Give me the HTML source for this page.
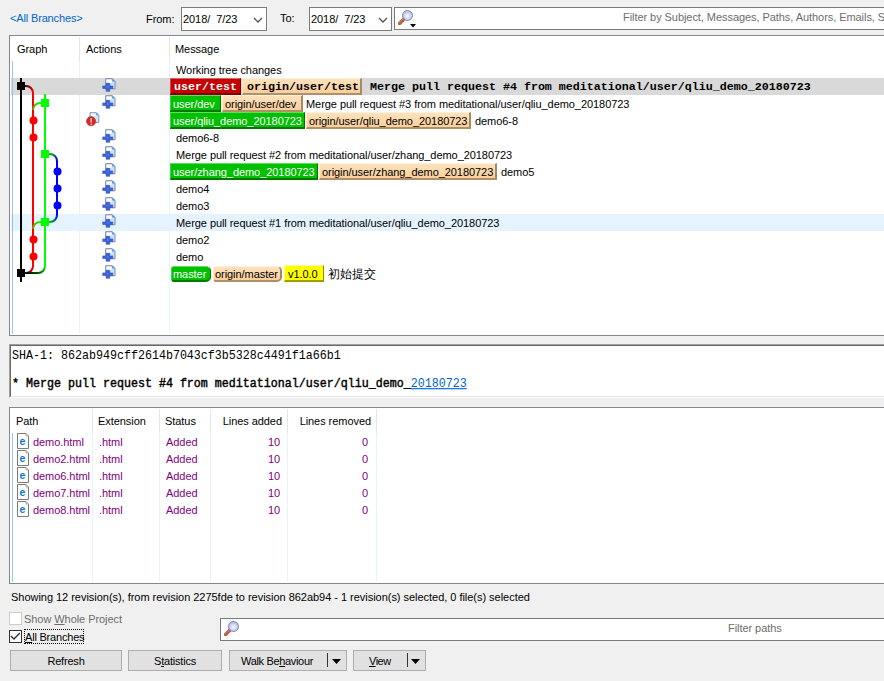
<!DOCTYPE html>
<html><head><meta charset="utf-8">
<style>
*{margin:0;padding:0;box-sizing:border-box}
html,body{width:884px;height:681px;overflow:hidden;background:#f0f0f0}
body{position:relative;font-family:"Liberation Sans",sans-serif;font-size:11px;color:#000;letter-spacing:-0.06px}
.a{position:absolute;white-space:pre}
.t{position:absolute;white-space:pre;line-height:17px;height:17px;padding-top:1px}
.box{position:absolute;background:#fff;border:1px solid #7a7a7a}
.mono{font-family:"Liberation Mono",monospace;font-size:11.67px;letter-spacing:0}
.b{position:absolute;height:17px;line-height:16px;white-space:pre;padding-left:3px}
.red{background:#c40000;color:#fff;border-top:1px solid #e06060;border-left:1px solid #d84848;border-right:1px solid #7a0000;border-bottom:2px solid #800000}
.grn{background:#00c000;color:#fff;border-top:1px solid #60e060;border-left:1px solid #40d040;border-right:1px solid #007000;border-bottom:2px solid #007800}
.org{background:linear-gradient(#fde2bd,#f9cf9a);color:#000;border-top:1px solid #fff0dc;border-left:1px solid #fde8c8;border-right:2px solid #a88860;border-bottom:2px solid #b09068}
.yel{background:#ffff00;color:#000;border-top:1px solid #ffff90;border-left:1px solid #ffff80;border-right:1px solid #909000;border-bottom:2px solid #a0a000}
.btn{position:absolute;top:650px;height:21px;background:#e1e1e1;border:1px solid #adadad;text-align:center;line-height:19px;padding-top:1px;letter-spacing:-0.2px}
u{text-decoration:underline}
</style></head><body>

<div class="a" style="left:10px;top:12px;color:#0066cc;letter-spacing:-0.15px">&lt;All Branches&gt;</div>
<div class="a" style="left:146px;top:13px">From:</div>
<div class="box" style="left:181px;top:7px;width:86px;height:24px"></div>
<div class="a" style="left:183px;top:13px">2018/  7/23</div>
<svg class="a" style="left:252px;top:15px" width="12" height="9"><path d="M2 3 L6 7 L10 3" fill="none" stroke="#555" stroke-width="1.3"/></svg>
<div class="a" style="left:280px;top:12px">To:</div>
<div class="box" style="left:309px;top:7px;width:83px;height:24px"></div>
<div class="a" style="left:311px;top:13px">2018/  7/23</div>
<svg class="a" style="left:377px;top:15px" width="12" height="9"><path d="M2 3 L6 7 L10 3" fill="none" stroke="#555" stroke-width="1.3"/></svg>
<div class="box" style="left:394px;top:7px;width:500px;height:23px"></div>
<div class="a" style="left:623px;top:11px;color:#6d6d6d">Filter by Subject, Messages, Paths, Authors, Emails, S</div>
<svg class="a" style="left:398px;top:9px" width="16" height="16" viewBox="0 0 16 16">
<defs><radialGradient id="mg1" cx="0.5" cy="0.55" r="0.6"><stop offset="0" stop-color="#ffffff"/><stop offset="0.5" stop-color="#d0d4f4"/><stop offset="1" stop-color="#a8aee0"/></radialGradient></defs>
<line x1="1.6" y1="14.4" x2="6.5" y2="9.5" stroke="#b86048" stroke-width="3.6" stroke-linecap="round"/><line x1="1.8" y1="13.6" x2="6" y2="9.4" stroke="#e0a088" stroke-width="1" stroke-dasharray="1 1"/>
<circle cx="9.5" cy="6.5" r="5" fill="url(#mg1)" stroke="#7880a8" stroke-width="0.9"/>
</svg>
<svg class="a" style="left:410px;top:24px" width="7" height="4"><path d="M0 0 H6 L3 3.5Z" fill="#000"/></svg>
<div class="box" style="left:9px;top:35px;width:890px;height:301px;border-color:#828790"></div>
<div class="a" style="left:17px;top:43px">Graph</div>
<div class="a" style="left:86px;top:43px">Actions</div>
<div class="a" style="left:175px;top:43px">Message</div>
<div class="a" style="left:79px;top:37px;width:1px;height:24px;background:#e5e5e5"></div>
<div class="a" style="left:169px;top:37px;width:1px;height:24px;background:#e5e5e5"></div>
<div class="a" style="left:79px;top:61px;width:1px;height:273px;background:#eaf2fb"></div>
<div class="a" style="left:169px;top:61px;width:1px;height:273px;background:#eaf2fb"></div>
<div class="a" style="left:11px;top:78px;width:874px;height:17px;background:#d9d9d9"></div>
<div class="a" style="left:11px;top:214px;width:874px;height:17px;background:#e5f3ff"></div>
<div class="a" style="left:12px;top:61px;width:1px;height:273px;background:#99c4f0"></div>
<svg class="a" style="left:0;top:0" width="80" height="340"><line x1="21" y1="78" x2="21" y2="282" stroke="#000" stroke-width="2"/><defs><linearGradient id="kr" x1="0" y1="0" x2="1" y2="1"><stop offset="0" stop-color="#500000"/><stop offset="1" stop-color="#ff0000"/></linearGradient><linearGradient id="gr" x1="1" y1="0" x2="0" y2="1"><stop offset="0" stop-color="#00ff00"/><stop offset="1" stop-color="#a08000"/></linearGradient><linearGradient id="gb" x1="0" y1="0" x2="1" y2="1"><stop offset="0" stop-color="#00c000"/><stop offset="1" stop-color="#0000ff"/></linearGradient><linearGradient id="bg" x1="1" y1="0" x2="0" y2="1"><stop offset="0" stop-color="#0000ff"/><stop offset="1" stop-color="#00c000"/></linearGradient><linearGradient id="rk" x1="1" y1="0" x2="0" y2="1"><stop offset="0" stop-color="#ff0000"/><stop offset="1" stop-color="#500000"/></linearGradient><linearGradient id="gk" x1="1" y1="0" x2="0" y2="1"><stop offset="0" stop-color="#00ff00"/><stop offset="1" stop-color="#000000"/></linearGradient></defs><path d="M25 86 H26 A7 7 0 0 1 33 93" fill="none" stroke="url(#kr)" stroke-width="2"/><line x1="33" y1="93" x2="33" y2="266.5" stroke="#f00" stroke-width="2"/><path d="M33 266 A7 7 0 0 1 26 273 H25" fill="none" stroke="url(#rk)" stroke-width="2"/><line x1="45" y1="94" x2="45" y2="266" stroke="#0f0" stroke-width="2"/><path d="M45 266 A7 7 0 0 1 38 273 H25" fill="none" stroke="url(#gk)" stroke-width="2"/><path d="M41 103 H40 A7 7 0 0 0 33 110" fill="none" stroke="url(#gr)" stroke-width="2"/><path d="M49 154 H50 A7 7 0 0 1 57 161" fill="none" stroke="url(#gb)" stroke-width="2"/><line x1="57" y1="161" x2="57" y2="215" stroke="#00f" stroke-width="2"/><path d="M57 215 A7 7 0 0 1 50 222 H49" fill="none" stroke="url(#bg)" stroke-width="2"/><path d="M41 222 H40 A7 7 0 0 0 33 229" fill="none" stroke="url(#gr)" stroke-width="2"/><rect x="17" y="82" width="8" height="8" fill="#000"/><rect x="41" y="99" width="8" height="8" fill="#0f0"/><circle cx="33.5" cy="120.5" r="4" fill="#f00"/><circle cx="33.5" cy="137.5" r="4" fill="#f00"/><rect x="41" y="150" width="8" height="8" fill="#0f0"/><circle cx="57.5" cy="171.5" r="4" fill="#00f"/><circle cx="57.5" cy="188.5" r="4" fill="#00f"/><circle cx="57.5" cy="205.5" r="4" fill="#00f"/><rect x="41" y="218" width="8" height="8" fill="#0f0"/><circle cx="33.5" cy="239.5" r="4" fill="#f00"/><circle cx="33.5" cy="256.5" r="4" fill="#f00"/><rect x="17" y="269" width="8" height="8" fill="#000"/></svg>
<svg class="a" style="left:100px;top:78px" width="17" height="15" viewBox="0 0 17 15">
<path d="M5.7 0.7 H12.3 L15 3.4 V10.8 H5.7Z" fill="#cfe1f7" stroke="#7a86a6" stroke-width="1"/>
<rect x="6.5" y="1.6" width="5" height="3.5" fill="#ffffff" opacity="0.85"/>
<path d="M12.2 0.6 L15.1 3.5 H12.2Z" fill="#3aa0f0"/>
<path d="M6.1 5.3 H9.8 V7.9 H12.8 V10.5 H9.8 V13.3 H6.1 V10.5 H2.7 V7.9 H6.1Z" fill="#3a64da" stroke="#2a44a8" stroke-width="0.5"/>
<rect x="6.6" y="8.2" width="2.4" height="1.2" fill="#5a84f0" opacity="0.8"/>
</svg>
<svg class="a" style="left:100px;top:95px" width="17" height="15" viewBox="0 0 17 15">
<path d="M5.7 0.7 H12.3 L15 3.4 V10.8 H5.7Z" fill="#cfe1f7" stroke="#7a86a6" stroke-width="1"/>
<rect x="6.5" y="1.6" width="5" height="3.5" fill="#ffffff" opacity="0.85"/>
<path d="M12.2 0.6 L15.1 3.5 H12.2Z" fill="#3aa0f0"/>
<path d="M6.1 5.3 H9.8 V7.9 H12.8 V10.5 H9.8 V13.3 H6.1 V10.5 H2.7 V7.9 H6.1Z" fill="#3a64da" stroke="#2a44a8" stroke-width="0.5"/>
<rect x="6.6" y="8.2" width="2.4" height="1.2" fill="#5a84f0" opacity="0.8"/>
</svg>
<svg class="a" style="left:100px;top:129px" width="17" height="15" viewBox="0 0 17 15">
<path d="M5.7 0.7 H12.3 L15 3.4 V10.8 H5.7Z" fill="#cfe1f7" stroke="#7a86a6" stroke-width="1"/>
<rect x="6.5" y="1.6" width="5" height="3.5" fill="#ffffff" opacity="0.85"/>
<path d="M12.2 0.6 L15.1 3.5 H12.2Z" fill="#3aa0f0"/>
<path d="M6.1 5.3 H9.8 V7.9 H12.8 V10.5 H9.8 V13.3 H6.1 V10.5 H2.7 V7.9 H6.1Z" fill="#3a64da" stroke="#2a44a8" stroke-width="0.5"/>
<rect x="6.6" y="8.2" width="2.4" height="1.2" fill="#5a84f0" opacity="0.8"/>
</svg>
<svg class="a" style="left:100px;top:146px" width="17" height="15" viewBox="0 0 17 15">
<path d="M5.7 0.7 H12.3 L15 3.4 V10.8 H5.7Z" fill="#cfe1f7" stroke="#7a86a6" stroke-width="1"/>
<rect x="6.5" y="1.6" width="5" height="3.5" fill="#ffffff" opacity="0.85"/>
<path d="M12.2 0.6 L15.1 3.5 H12.2Z" fill="#3aa0f0"/>
<path d="M6.1 5.3 H9.8 V7.9 H12.8 V10.5 H9.8 V13.3 H6.1 V10.5 H2.7 V7.9 H6.1Z" fill="#3a64da" stroke="#2a44a8" stroke-width="0.5"/>
<rect x="6.6" y="8.2" width="2.4" height="1.2" fill="#5a84f0" opacity="0.8"/>
</svg>
<svg class="a" style="left:100px;top:163px" width="17" height="15" viewBox="0 0 17 15">
<path d="M5.7 0.7 H12.3 L15 3.4 V10.8 H5.7Z" fill="#cfe1f7" stroke="#7a86a6" stroke-width="1"/>
<rect x="6.5" y="1.6" width="5" height="3.5" fill="#ffffff" opacity="0.85"/>
<path d="M12.2 0.6 L15.1 3.5 H12.2Z" fill="#3aa0f0"/>
<path d="M6.1 5.3 H9.8 V7.9 H12.8 V10.5 H9.8 V13.3 H6.1 V10.5 H2.7 V7.9 H6.1Z" fill="#3a64da" stroke="#2a44a8" stroke-width="0.5"/>
<rect x="6.6" y="8.2" width="2.4" height="1.2" fill="#5a84f0" opacity="0.8"/>
</svg>
<svg class="a" style="left:100px;top:180px" width="17" height="15" viewBox="0 0 17 15">
<path d="M5.7 0.7 H12.3 L15 3.4 V10.8 H5.7Z" fill="#cfe1f7" stroke="#7a86a6" stroke-width="1"/>
<rect x="6.5" y="1.6" width="5" height="3.5" fill="#ffffff" opacity="0.85"/>
<path d="M12.2 0.6 L15.1 3.5 H12.2Z" fill="#3aa0f0"/>
<path d="M6.1 5.3 H9.8 V7.9 H12.8 V10.5 H9.8 V13.3 H6.1 V10.5 H2.7 V7.9 H6.1Z" fill="#3a64da" stroke="#2a44a8" stroke-width="0.5"/>
<rect x="6.6" y="8.2" width="2.4" height="1.2" fill="#5a84f0" opacity="0.8"/>
</svg>
<svg class="a" style="left:100px;top:197px" width="17" height="15" viewBox="0 0 17 15">
<path d="M5.7 0.7 H12.3 L15 3.4 V10.8 H5.7Z" fill="#cfe1f7" stroke="#7a86a6" stroke-width="1"/>
<rect x="6.5" y="1.6" width="5" height="3.5" fill="#ffffff" opacity="0.85"/>
<path d="M12.2 0.6 L15.1 3.5 H12.2Z" fill="#3aa0f0"/>
<path d="M6.1 5.3 H9.8 V7.9 H12.8 V10.5 H9.8 V13.3 H6.1 V10.5 H2.7 V7.9 H6.1Z" fill="#3a64da" stroke="#2a44a8" stroke-width="0.5"/>
<rect x="6.6" y="8.2" width="2.4" height="1.2" fill="#5a84f0" opacity="0.8"/>
</svg>
<svg class="a" style="left:100px;top:214px" width="17" height="15" viewBox="0 0 17 15">
<path d="M5.7 0.7 H12.3 L15 3.4 V10.8 H5.7Z" fill="#cfe1f7" stroke="#7a86a6" stroke-width="1"/>
<rect x="6.5" y="1.6" width="5" height="3.5" fill="#ffffff" opacity="0.85"/>
<path d="M12.2 0.6 L15.1 3.5 H12.2Z" fill="#3aa0f0"/>
<path d="M6.1 5.3 H9.8 V7.9 H12.8 V10.5 H9.8 V13.3 H6.1 V10.5 H2.7 V7.9 H6.1Z" fill="#3a64da" stroke="#2a44a8" stroke-width="0.5"/>
<rect x="6.6" y="8.2" width="2.4" height="1.2" fill="#5a84f0" opacity="0.8"/>
</svg>
<svg class="a" style="left:100px;top:231px" width="17" height="15" viewBox="0 0 17 15">
<path d="M5.7 0.7 H12.3 L15 3.4 V10.8 H5.7Z" fill="#cfe1f7" stroke="#7a86a6" stroke-width="1"/>
<rect x="6.5" y="1.6" width="5" height="3.5" fill="#ffffff" opacity="0.85"/>
<path d="M12.2 0.6 L15.1 3.5 H12.2Z" fill="#3aa0f0"/>
<path d="M6.1 5.3 H9.8 V7.9 H12.8 V10.5 H9.8 V13.3 H6.1 V10.5 H2.7 V7.9 H6.1Z" fill="#3a64da" stroke="#2a44a8" stroke-width="0.5"/>
<rect x="6.6" y="8.2" width="2.4" height="1.2" fill="#5a84f0" opacity="0.8"/>
</svg>
<svg class="a" style="left:100px;top:248px" width="17" height="15" viewBox="0 0 17 15">
<path d="M5.7 0.7 H12.3 L15 3.4 V10.8 H5.7Z" fill="#cfe1f7" stroke="#7a86a6" stroke-width="1"/>
<rect x="6.5" y="1.6" width="5" height="3.5" fill="#ffffff" opacity="0.85"/>
<path d="M12.2 0.6 L15.1 3.5 H12.2Z" fill="#3aa0f0"/>
<path d="M6.1 5.3 H9.8 V7.9 H12.8 V10.5 H9.8 V13.3 H6.1 V10.5 H2.7 V7.9 H6.1Z" fill="#3a64da" stroke="#2a44a8" stroke-width="0.5"/>
<rect x="6.6" y="8.2" width="2.4" height="1.2" fill="#5a84f0" opacity="0.8"/>
</svg>
<svg class="a" style="left:100px;top:265px" width="17" height="15" viewBox="0 0 17 15">
<path d="M5.7 0.7 H12.3 L15 3.4 V10.8 H5.7Z" fill="#cfe1f7" stroke="#7a86a6" stroke-width="1"/>
<rect x="6.5" y="1.6" width="5" height="3.5" fill="#ffffff" opacity="0.85"/>
<path d="M12.2 0.6 L15.1 3.5 H12.2Z" fill="#3aa0f0"/>
<path d="M6.1 5.3 H9.8 V7.9 H12.8 V10.5 H9.8 V13.3 H6.1 V10.5 H2.7 V7.9 H6.1Z" fill="#3a64da" stroke="#2a44a8" stroke-width="0.5"/>
<rect x="6.6" y="8.2" width="2.4" height="1.2" fill="#5a84f0" opacity="0.8"/>
</svg>
<svg class="a" style="left:84px;top:112px" width="17" height="16" viewBox="0 0 17 16">
<path d="M6 0.7 H12.3 L14.8 3.2 V10.5 H6Z" fill="#d6e6f8" stroke="#8494b4" stroke-width="1"/>
<rect x="7" y="1.6" width="4.5" height="3" fill="#ffffff" opacity="0.85"/>
<path d="M12.2 0.6 L14.9 3.3 H12.2Z" fill="#3aa0f0"/>
<circle cx="7.1" cy="9.2" r="4.6" fill="#d62828" stroke="#b01818" stroke-width="0.5"/>
<rect x="6.5" y="6" width="1.3" height="4.6" fill="#ffe0e0"/><rect x="6.5" y="11.6" width="1.3" height="1.2" fill="#ffe0e0"/>
</svg>
<div class="t" style="left:176px;top:61px;">Working tree changes</div>
<div class="b red mono" style="left:170px;top:78px;width:71px;font-weight:bold;">user/test</div>
<div class="b org mono" style="left:242px;top:78px;width:120px;font-weight:bold;padding-left:4px;">origin/user/test</div>
<div class="t mono" style="left:370px;top:78px;font-weight:bold;">Merge pull request #4 from meditational/user/qliu_demo_20180723</div>
<div class="b grn" style="left:170px;top:95px;width:51px;padding-left:2px;">user/dev</div>
<div class="b org" style="left:222px;top:95px;width:81px;padding-left:2px;">origin/user/dev</div>
<div class="t" style="left:306px;top:95px;">Merge pull request #3 from meditational/user/qliu_demo_20180723</div>
<div class="b grn" style="left:170px;top:112px;width:135px;padding-left:2px;">user/qliu_demo_20180723</div>
<div class="b org" style="left:306px;top:112px;width:165px;padding-left:2px;">origin/user/qliu_demo_20180723</div>
<div class="t" style="left:475px;top:112px;">demo6-8</div>
<div class="t" style="left:176px;top:129px;">demo6-8</div>
<div class="t" style="left:176px;top:146px;">Merge pull request #2 from meditational/user/zhang_demo_20180723</div>
<div class="b grn" style="left:170px;top:163px;width:148px;padding-left:2px;">user/zhang_demo_20180723</div>
<div class="b org" style="left:319px;top:163px;width:178px;padding-left:2px;">origin/user/zhang_demo_20180723</div>
<div class="t" style="left:501px;top:163px;">demo5</div>
<div class="t" style="left:176px;top:180px;">demo4</div>
<div class="t" style="left:176px;top:197px;">demo3</div>
<div class="t" style="left:176px;top:214px;">Merge pull request #1 from meditational/user/qliu_demo_20180723</div>
<div class="t" style="left:176px;top:231px;">demo2</div>
<div class="t" style="left:176px;top:248px;">demo</div>
<div class="b grn" style="left:171px;top:265px;width:40px;padding-left:2px;border-radius:3px 5px 5px 3px;top:266px;height:16px;line-height:15px;padding-left:1px;">master</div>
<div class="b org" style="left:213px;top:265px;width:69px;padding-left:2px;border-radius:3px 5px 5px 3px;top:266px;height:16px;line-height:15px;padding-left:1px;">origin/master</div>
<div class="b yel" style="left:284px;top:265px;width:40px;padding-left:2px;padding-left:3px;">v1.0.0</div>
<div class="t" style="left:328px;top:265px;font-size:12px;">初始提交</div>
<div class="a" style="left:9px;top:344px;width:880px;height:54px;background:#fff;border-top:1px solid #a0a0a0;border-left:1px solid #a0a0a0;border-bottom:1px solid #fff"></div>
<div class="a" style="left:10px;top:345px;width:880px;height:52px;border-top:1px solid #696969;border-left:1px solid #696969;border-bottom:1px solid #e3e3e3"></div>
<div class="a mono" style="left:12px;top:349px;line-height:14px;transform:scaleY(1.13);transform-origin:0 10px">SHA-1: 862ab949cff2614b7043cf3b5328c4491f1a66b1</div>
<div class="a mono" style="left:12px;top:377px;line-height:14px;-webkit-text-stroke:0.4px #000;transform:scaleY(1.13);transform-origin:0 10px">* Merge pull request #4 from meditational/user/qliu_demo_<span style="color:#0066cc;text-decoration:underline;-webkit-text-stroke:0">20180723</span></div>
<div class="box" style="left:9px;top:407px;width:890px;height:177px;border-color:#828790"></div>
<div class="a" style="left:16px;top:415px">Path</div>
<div class="a" style="left:98px;top:415px">Extension</div>
<div class="a" style="left:165px;top:415px">Status</div>
<div class="a" style="left:211px;top:415px;width:71px;text-align:right">Lines added</div>
<div class="a" style="left:289px;top:415px;width:82px;text-align:right">Lines removed</div>
<div class="a" style="left:92px;top:409px;width:1px;height:24px;background:#e5e5e5"></div>
<div class="a" style="left:92px;top:433px;width:1px;height:149px;background:#eaf2fb"></div>
<div class="a" style="left:159px;top:409px;width:1px;height:24px;background:#e5e5e5"></div>
<div class="a" style="left:159px;top:433px;width:1px;height:149px;background:#eaf2fb"></div>
<div class="a" style="left:210px;top:409px;width:1px;height:24px;background:#e5e5e5"></div>
<div class="a" style="left:210px;top:433px;width:1px;height:149px;background:#eaf2fb"></div>
<div class="a" style="left:287px;top:409px;width:1px;height:24px;background:#e5e5e5"></div>
<div class="a" style="left:287px;top:433px;width:1px;height:149px;background:#eaf2fb"></div>
<div class="a" style="left:376px;top:409px;width:1px;height:24px;background:#e5e5e5"></div>
<div class="a" style="left:376px;top:433px;width:1px;height:149px;background:#eaf2fb"></div>
<div class="a" style="left:12px;top:433px;width:1px;height:149px;background:#99c4f0"></div>
<svg class="a" style="left:17px;top:433px" width="13" height="17" viewBox="0 0 13 17">
<path d="M0.5 0.5 H9 L11.5 3 V15.5 H0.5Z" fill="#ffffff" stroke="#7a7a7a" stroke-width="1"/>
<path d="M9 0.5 V3 H11.5" fill="#e0e0e0" stroke="#9a9a9a" stroke-width="0.8"/>
<text x="2.4" y="12" font-family="Liberation Sans" font-weight="bold" font-size="10.5" fill="#0a74d8">e</text>
</svg>
<div class="t" style="left:33px;top:433px;color:#800080">demo.html</div>
<div class="t" style="left:99px;top:433px;color:#800080">.html</div>
<div class="t" style="left:166px;top:433px;color:#800080">Added</div>
<div class="t" style="left:211px;top:433px;width:69px;text-align:right;color:#800080">10</div>
<div class="t" style="left:289px;top:433px;width:79px;text-align:right;color:#800080">0</div>
<svg class="a" style="left:17px;top:450px" width="13" height="17" viewBox="0 0 13 17">
<path d="M0.5 0.5 H9 L11.5 3 V15.5 H0.5Z" fill="#ffffff" stroke="#7a7a7a" stroke-width="1"/>
<path d="M9 0.5 V3 H11.5" fill="#e0e0e0" stroke="#9a9a9a" stroke-width="0.8"/>
<text x="2.4" y="12" font-family="Liberation Sans" font-weight="bold" font-size="10.5" fill="#0a74d8">e</text>
</svg>
<div class="t" style="left:33px;top:450px;color:#800080">demo2.html</div>
<div class="t" style="left:99px;top:450px;color:#800080">.html</div>
<div class="t" style="left:166px;top:450px;color:#800080">Added</div>
<div class="t" style="left:211px;top:450px;width:69px;text-align:right;color:#800080">10</div>
<div class="t" style="left:289px;top:450px;width:79px;text-align:right;color:#800080">0</div>
<svg class="a" style="left:17px;top:467px" width="13" height="17" viewBox="0 0 13 17">
<path d="M0.5 0.5 H9 L11.5 3 V15.5 H0.5Z" fill="#ffffff" stroke="#7a7a7a" stroke-width="1"/>
<path d="M9 0.5 V3 H11.5" fill="#e0e0e0" stroke="#9a9a9a" stroke-width="0.8"/>
<text x="2.4" y="12" font-family="Liberation Sans" font-weight="bold" font-size="10.5" fill="#0a74d8">e</text>
</svg>
<div class="t" style="left:33px;top:467px;color:#800080">demo6.html</div>
<div class="t" style="left:99px;top:467px;color:#800080">.html</div>
<div class="t" style="left:166px;top:467px;color:#800080">Added</div>
<div class="t" style="left:211px;top:467px;width:69px;text-align:right;color:#800080">10</div>
<div class="t" style="left:289px;top:467px;width:79px;text-align:right;color:#800080">0</div>
<svg class="a" style="left:17px;top:484px" width="13" height="17" viewBox="0 0 13 17">
<path d="M0.5 0.5 H9 L11.5 3 V15.5 H0.5Z" fill="#ffffff" stroke="#7a7a7a" stroke-width="1"/>
<path d="M9 0.5 V3 H11.5" fill="#e0e0e0" stroke="#9a9a9a" stroke-width="0.8"/>
<text x="2.4" y="12" font-family="Liberation Sans" font-weight="bold" font-size="10.5" fill="#0a74d8">e</text>
</svg>
<div class="t" style="left:33px;top:484px;color:#800080">demo7.html</div>
<div class="t" style="left:99px;top:484px;color:#800080">.html</div>
<div class="t" style="left:166px;top:484px;color:#800080">Added</div>
<div class="t" style="left:211px;top:484px;width:69px;text-align:right;color:#800080">10</div>
<div class="t" style="left:289px;top:484px;width:79px;text-align:right;color:#800080">0</div>
<svg class="a" style="left:17px;top:501px" width="13" height="17" viewBox="0 0 13 17">
<path d="M0.5 0.5 H9 L11.5 3 V15.5 H0.5Z" fill="#ffffff" stroke="#7a7a7a" stroke-width="1"/>
<path d="M9 0.5 V3 H11.5" fill="#e0e0e0" stroke="#9a9a9a" stroke-width="0.8"/>
<text x="2.4" y="12" font-family="Liberation Sans" font-weight="bold" font-size="10.5" fill="#0a74d8">e</text>
</svg>
<div class="t" style="left:33px;top:501px;color:#800080">demo8.html</div>
<div class="t" style="left:99px;top:501px;color:#800080">.html</div>
<div class="t" style="left:166px;top:501px;color:#800080">Added</div>
<div class="t" style="left:211px;top:501px;width:69px;text-align:right;color:#800080">10</div>
<div class="t" style="left:289px;top:501px;width:79px;text-align:right;color:#800080">0</div>
<div class="a" style="left:11px;top:591px;letter-spacing:-0.03px">Showing 12 revision(s), from revision 2275fde to revision 862ab94 - 1 revision(s) selected, 0 file(s) selected</div>
<div class="a" style="left:9px;top:612px;width:13px;height:13px;background:#fff;border:1px solid #cccccc"></div>
<div class="a" style="left:24px;top:613px;color:#6d6d6d">Show <u>W</u>hole Project</div>
<div class="a" style="left:9px;top:630px;width:13px;height:13px;background:#fff;border:1px solid #333"></div>
<svg class="a" style="left:9px;top:630px" width="13" height="13"><path d="M1.8 6 L5 9 L10.8 3" fill="none" stroke="#333" stroke-width="1.4"/></svg>
<div class="a" style="left:24px;top:629px;width:60px;height:15px;border:1px dotted #000"></div>
<div class="a" style="left:25px;top:631px;letter-spacing:-0.2px"><u>A</u>ll Branches</div>
<div class="box" style="left:220px;top:618px;width:680px;height:23px"></div>
<svg class="a" style="left:224px;top:620px" width="16" height="16" viewBox="0 0 16 16">
<defs><radialGradient id="mg2" cx="0.5" cy="0.55" r="0.6"><stop offset="0" stop-color="#ffffff"/><stop offset="0.5" stop-color="#d0d4f4"/><stop offset="1" stop-color="#a8aee0"/></radialGradient></defs>
<line x1="1.6" y1="14.4" x2="6.5" y2="9.5" stroke="#b86048" stroke-width="3.6" stroke-linecap="round"/><line x1="1.8" y1="13.6" x2="6" y2="9.4" stroke="#e0a088" stroke-width="1" stroke-dasharray="1 1"/>
<circle cx="9.5" cy="6.5" r="5" fill="url(#mg2)" stroke="#7880a8" stroke-width="0.9"/>
</svg>
<div class="a" style="left:728px;top:622px;color:#6d6d6d">Filter paths</div>
<div class="btn" style="left:10px;width:112px">Refresh</div>
<div class="btn" style="left:128px;width:94px">S<u>t</u>atistics</div>
<div class="btn" style="left:229px;width:118px;text-align:left;padding-left:11px;letter-spacing:-0.33px">Walk Be<u>h</u>aviour</div>
<div class="a" style="left:327px;top:653px;width:1px;height:14px;background:#333"></div>
<svg class="a" style="left:332px;top:659px" width="9" height="5"><path d="M0 0 H9 L4.5 5Z" fill="#000"/></svg>
<div class="btn" style="left:353px;width:73px;text-align:left;padding-left:15px;letter-spacing:-0.5px"><u>V</u>iew</div>
<div class="a" style="left:407px;top:653px;width:1px;height:14px;background:#333"></div>
<svg class="a" style="left:411px;top:659px" width="9" height="5"><path d="M0 0 H9 L4.5 5Z" fill="#000"/></svg>
</body></html>
